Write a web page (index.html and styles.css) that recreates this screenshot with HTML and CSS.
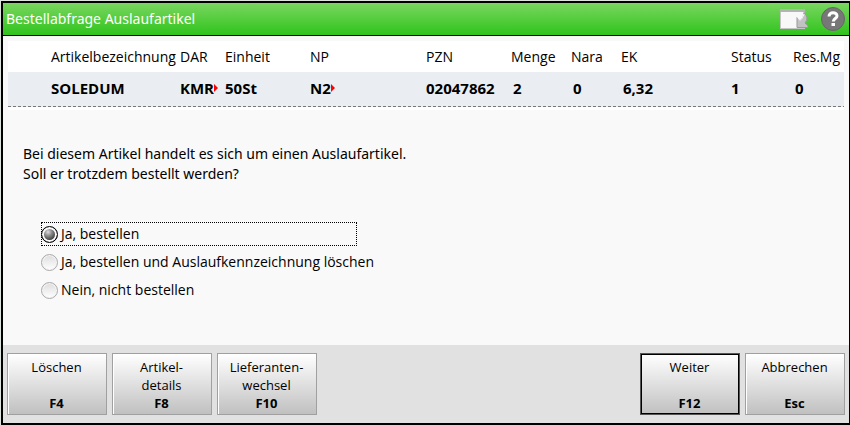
FILE: index.html
```html
<!DOCTYPE html>
<html lang="de">
<head>
  <meta charset="UTF-8">
  <meta name="viewport" content="width=device-width, initial-scale=1.0">
  <title>Bestellabfrage Auslaufartikel</title>
  <link rel="stylesheet" href="styles.css">
</head>
<body>
<form class="dialog">
  <header class="titlebar">
    <h1 class="title">Bestellabfrage Auslaufartikel</h1>
    <button type="button" class="icon-button" aria-label="Fenster verkleinern">
      <svg width="28" height="21" viewBox="0 0 28 21">
        <rect x="0.5" y="0.5" width="24" height="19" fill="#f8f8f8" stroke="#c4c4c4"/>
        <rect x="0" y="0" width="25" height="3" fill="#b4b4b4"/>
        <path d="M17 8.500 L20 11.500 Q24 9 24 3.500 Q29.500 9 25 14 L28 17 V18.500 H17 Z" fill="#c2c2c2" stroke="#999"/>
        <path d="M17.500 8.500 L20 11.500 Q23 9.500 24 5" fill="none" stroke="#fff"/>
      </svg>
    </button>
    <button type="button" class="icon-button" aria-label="Hilfe">
      <svg width="24" height="24" viewBox="0 0 24 24">
        <circle cx="12" cy="12" r="11.500" fill="#777" stroke="#666"/>
        <path d="M8 9.500 C8 4.500 16 4.500 16 9 C16 11.500 12.300 11.500 12.300 14.500" fill="none" stroke="#fff" stroke-width="3"/>
        <rect x="10.500" y="16" width="3.500" height="3" fill="#fff"/>
      </svg>
    </button>
  </header>

  <main class="content">
    <table class="articles">
      <colgroup>
        <col class="col-mark"><col class="col-name"><col class="col-dar"><col class="col-unit"><col class="col-np">
        <col class="col-pzn"><col class="col-amount"><col class="col-nara"><col class="col-ek"><col class="col-status"><col>
      </colgroup>
      <thead>
        <tr>
          <td></td><th>Artikelbezeichnung</th><th>DAR</th><th>Einheit</th><th>NP</th><th>PZN</th>
          <th>Menge</th><th>Nara</th><th>EK</th><th>Status</th><th>Res.Mg</th>
        </tr>
      </thead>
      <tbody>
        <tr>
          <td></td><td>SOLEDUM</td><td><span class="more">KMR</span></td><td>50St</td><td><span class="more">N2</span></td><td>02047862</td>
          <td class="num">2</td><td class="num">0</td><td class="num">6,32</td><td>1</td><td class="num">0</td>
        </tr>
      </tbody>
    </table>

    <p class="question">Bei diesem Artikel handelt es sich um einen Auslaufartikel.<br>Soll er trotzdem bestellt werden?</p>

    <div class="options">
      <label class="option focused"><input type="radio" name="order" checked>Ja, bestellen</label>
      <label class="option"><input type="radio" name="order">Ja, bestellen und Auslaufkennzeichnung löschen</label>
      <label class="option"><input type="radio" name="order">Nein, nicht bestellen</label>
    </div>
  </main>

  <footer class="actions">
    <button type="button" class="action"><span>Löschen</span><b>F4</b></button>
    <button type="button" class="action"><span>Artikel-<br>details</span><b>F8</b></button>
    <button type="button" class="action"><span>Lieferanten-<br>wechsel</span><b>F10</b></button>
    <button type="submit" class="action default"><span>Weiter</span><b>F12</b></button>
    <button type="button" class="action"><span>Abbrechen</span><b>Esc</b></button>
  </footer>
</form>
</body>
</html>
```
FILE: styles.css
```css
* {
  box-sizing: border-box;
}
body {
  margin: 0;
  padding: 1px 0 0 1px;
  background: #dde3df;
  color: #000;
  font: 14px/20px "Open Sans", "Noto Sans", sans-serif;
}
button {
  font: inherit;
  color: inherit;
}
.dialog {
  display: flex;
  flex-direction: column;
  min-height: calc(100vh - 1px);
  border: 2px solid #000;
  border-right-width: 1px;
  background: #f9f9f9;
}

/* title bar */
.titlebar {
  display: flex;
  align-items: center;
  gap: 13px;
  height: 33px;
  padding: 0 4px 0 3px;
  border-bottom: 1px solid #000;
  background: linear-gradient(#7ad660, #2fc41c);
}
.title {
  flex: 1;
  margin: 0;
  font-family: "Noto Sans", "Open Sans", sans-serif;
  font-size: 14px;
  font-weight: 400;
  color: #fff;
}
.icon-button {
  display: flex;
  padding: 0;
  border: 0;
  background: none;
}

/* article list */
.content {
  flex: 1;
  padding: 5px 5px 16px;
}
.articles {
  width: 100%;
  table-layout: fixed;
  border-collapse: separate;
  border-spacing: 0;
  border-bottom: 3px solid #fff;
  background: #fff;
}
.articles th,
.articles td {
  padding: 0;
  text-align: left;
  white-space: nowrap;
}
.articles th {
  height: 31px;
  font-weight: 400;
}
.articles tbody {
  font-size: 15px;
}
.articles tbody tr {
  background: repeating-linear-gradient(90deg, #777 0 3px, #eaeef2 3px 5px) bottom / 100% 1px no-repeat #eaeef2;
}
.articles tbody td {
  height: 35px;
  padding-bottom: 4px;
  font-weight: 700;
}
.articles tbody .num {
  padding-left: 2px;
}
.col-mark { width: 43px; }
.col-name { width: 129px; }
.col-dar { width: 45px; }
.col-unit { width: 85px; }
.col-np { width: 116px; }
.col-pzn { width: 85px; }
.col-amount { width: 60px; }
.col-nara { width: 50px; }
.col-ek { width: 110px; }
.col-status { width: 62px; }
.more {
  display: inline-flex;
  align-items: center;
}
.more::after {
  content: "";
  border: 4px solid transparent;
  border-left-color: #f00;
  border-right: 0;
}

/* question */
.question {
  margin: 34px 15px 38px;
  font-family: "Noto Sans", "Open Sans", sans-serif;
}
.options {
  display: flex;
  flex-direction: column;
  gap: 4px;
  margin-left: 33px;
}
.option {
  display: flex;
  align-items: center;
  gap: 3px;
  width: 316px;
  height: 24px;
  border: 1px solid transparent;
  white-space: nowrap;
}
.option.focused {
  border: 1px dotted #000;
}
.option input {
  appearance: none;
  flex: none;
  width: 17px;
  height: 17px;
  margin: 0 0 0 -1px;
  border: 1px solid #aaa;
  border-radius: 50%;
  background: linear-gradient(#ddd, #fff);
  box-shadow: inset 0 0 0 1px #f4f4f4;
}
.option input:checked {
  border-color: #000;
  background: radial-gradient(circle at 6px 5px, #ddd, #888 4px, #222 10px);
  box-shadow: inset 0 0 0 2px #f9f9f9;
}

/* function keys */
.actions {
  display: flex;
  gap: 5px;
  padding: 8px 4px;
  background: #e1e1e1;
}
.action {
  display: flex;
  flex-direction: column;
  justify-content: space-between;
  width: 100px;
  height: 62px;
  padding: 4px 1px 2px 0;
  border: 1px solid #a0a0a0;
  background: linear-gradient(#fff, #e0e0e0 50%, #c0c0c0);
  box-shadow: inset 1px 1px 0 #fff;
  font-size: 13px;
  line-height: 18px;
  text-align: center;
  align-items: center;
}
.action.default {
  margin-left: auto;
  border-color: #555;
  box-shadow: inset 0 0 0 1px #000;
}
```
